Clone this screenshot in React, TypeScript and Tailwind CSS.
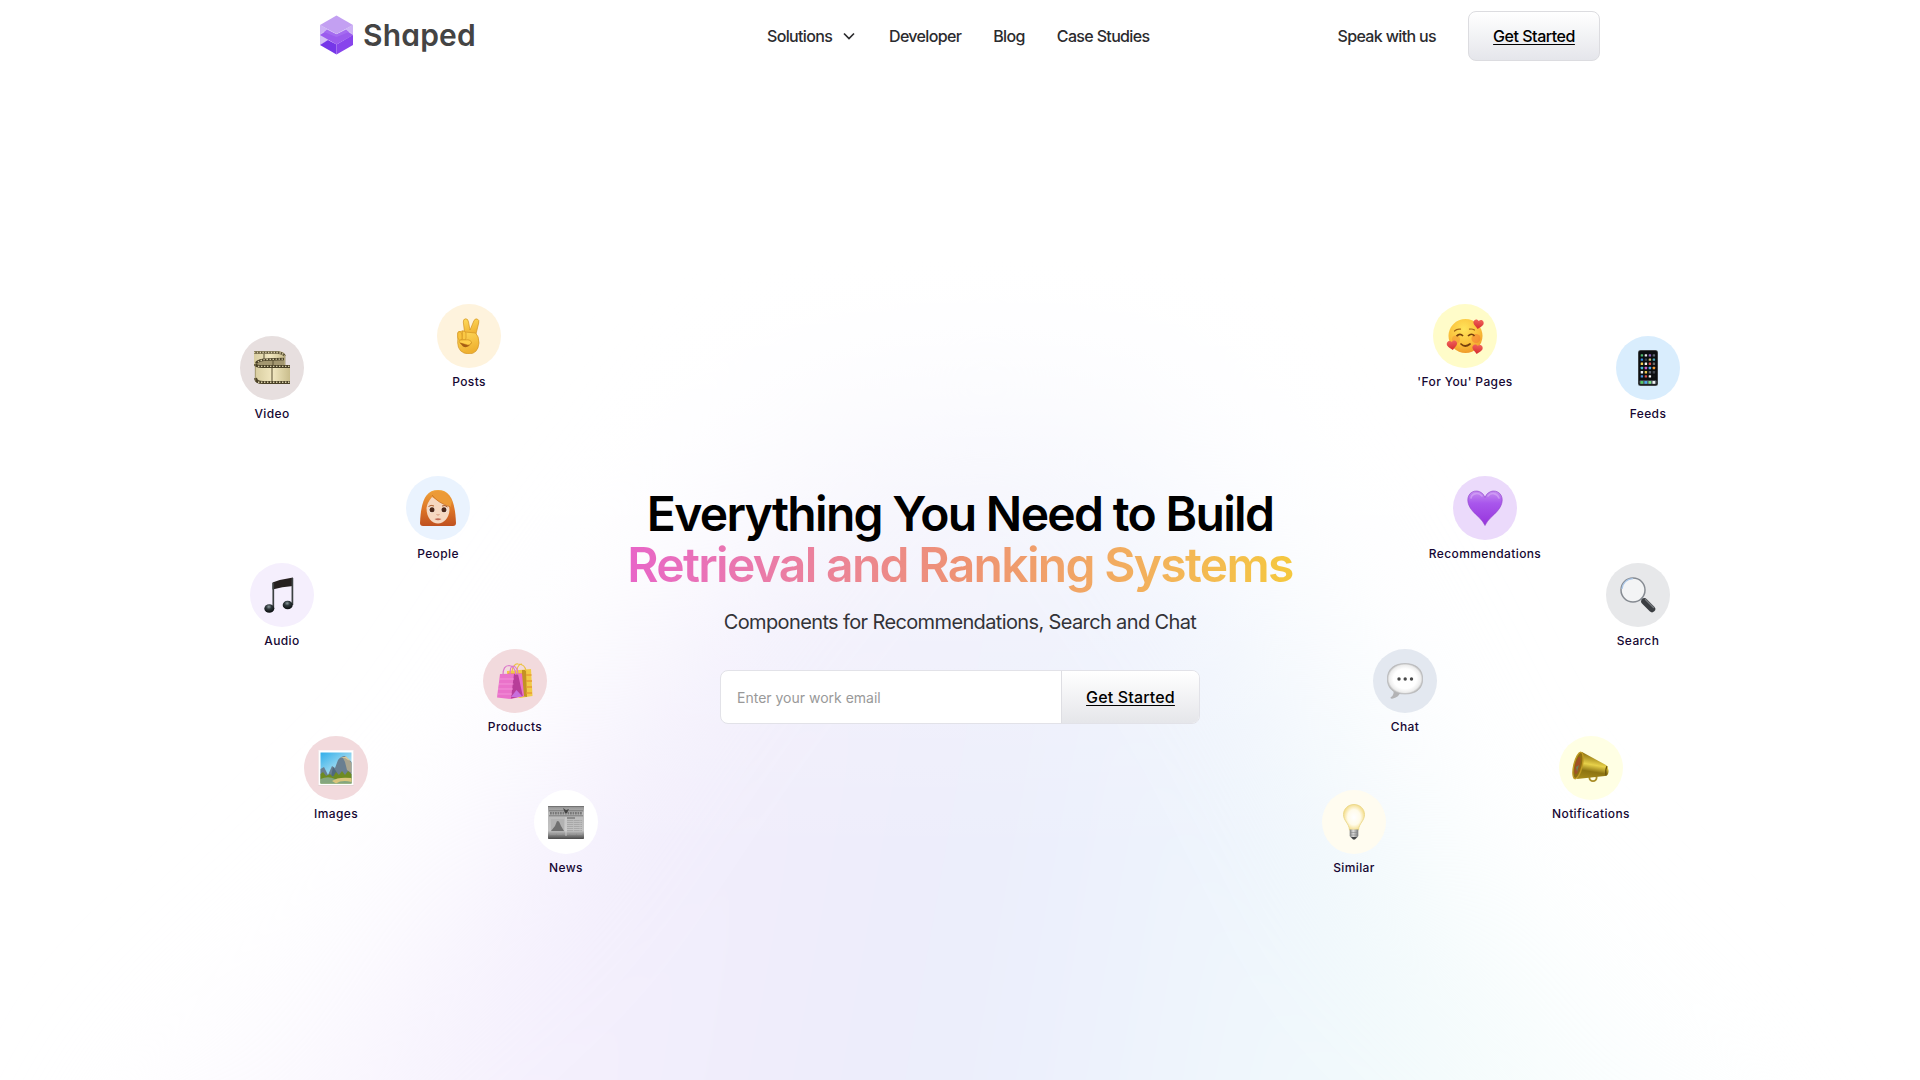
import type { ReactNode } from "react";

const Film = () => (
  <svg viewBox="0 0 36 36" className="size-9">
    <defs>
      <linearGradient id="filmA" x1="0" x2="1">
        <stop offset="0" stopColor="#d8cda0" />
        <stop offset=".5" stopColor="#f1e7c0" />
        <stop offset="1" stopColor="#c9bd8c" />
      </linearGradient>
    </defs>
    <path d="M0 1H25Q31 2 31 5V15H0Z" fill="url(#filmA)" />
    <path d="M1 13Q3 9 14 9L30 8V18H3Z" fill="#a39770" />
    <path d="M1 14Q1 17 6 17H36V34H9Q1 33 1 30Z" fill="url(#filmA)" />
    <path d="M0 2.500H24Q30 3.500 30.500 6" fill="none" stroke="#5a5033" strokeWidth="2.600" />
    <path d="M0 2.500H24Q30 3.500 30.500 6" fill="none" stroke="#d9cfa8" strokeWidth="1.500" strokeDasharray="1.400 1.400" />
    <path d="M2 13Q5 9.500 14 9.500L30 9" fill="none" stroke="#4a4127" strokeWidth="2.600" />
    <path d="M4 12Q7 9.500 14 9.500L30 9" fill="none" stroke="#d9cfa8" strokeWidth="1.200" strokeDasharray="1.400 1.600" />
    <path d="M1 14Q2 16.500 8 16.500H36" fill="none" stroke="#4a4127" strokeWidth="3" />
    <path d="M4 16.300H36" stroke="#d9cfa8" strokeWidth="1.300" strokeDasharray="1.400 1.600" />
    <path d="M1.500 28Q2 32.500 9 32.500H36" fill="none" stroke="#4a4127" strokeWidth="3" />
    <path d="M4 32.300H36" stroke="#d9cfa8" strokeWidth="1.500" strokeDasharray="1.400 1.600" />
    <path d="M18 18V31M10 4V9M19 10V15" stroke="#594e30" strokeWidth="1" />
    <path d="M1.300 14V31M31 5V15" stroke="#8b7f57" strokeWidth=".7" />
  </svg>
);

const Peace = () => (
  <svg viewBox="0 0 36 36" className="size-9">
    <defs>
      <linearGradient id="handA" x1="0" y1="0" x2=".3" y2="1">
        <stop offset="0" stopColor="#ffdb5c" />
        <stop offset="1" stopColor="#efb02f" />
      </linearGradient>
    </defs>
    <g stroke="#d39322" strokeWidth=".7">
      <path d="M14 18L12.300 4Q12.200 .8 14.800 .8Q17 .8 17.500 4L19 12L22.800 3Q24 .2 26.300 1Q28.500 2 27.700 5L24.500 18Z" fill="url(#handA)" />
      <path d="M7 15Q7 13 9.500 13.500Q12 12 14 14L24.500 15Q28 18 28 25Q27 36 17.500 36Q7 35 6.700 25Z" fill="url(#handA)" />
      <path d="M11.500 13Q14.500 12.500 15 15V20Q15 22 13 22Q11 22 11 20Z" fill="#fbc944" />
      <path d="M6.700 15Q7 13.500 9 13.600Q11 14 11 17V21Q10 23 8.500 22Q6.700 21 6.700 19Z" fill="#f9c33e" />
      <path d="M9 22Q7 24 9.500 25L17 27Q20 27 20.500 24.500Q20 22 17 21.800Z" fill="#ffd04b" />
    </g>
    <path d="M8.500 24.500L17 27.200Q20 27 20.800 24L18 28Q15 30 12 28.500Z" fill="#a65e14" />
  </svg>
);

const Woman = () => (
  <svg viewBox="0 0 36 36" className="size-9">
    <defs>
      <linearGradient id="hairA" x1="0" y1="0" x2="0" y2="1">
        <stop offset="0" stopColor="#f0a339" />
        <stop offset=".55" stopColor="#dc7427" />
        <stop offset="1" stopColor="#bf5120" />
      </linearGradient>
    </defs>
    <path d="M18 0C31 0 35 12 36 33Q36 36 33 36H3Q0 36 0 33C1 12 5 0 18 0Z" fill="url(#hairA)" />
    <path d="M6.500 18Q7 13 12 7Q22 12 29 15L29.500 20C29 28 24 33.500 18 33.500S6.500 28 6.500 18Z" fill="#f6d8c0" />
    <path d="M10 4Q16 12 30.500 17L32 11Q25 0 16 1Z" fill="#ec9a36" />
    <path d="M12 5Q18 13 30 16.800" fill="none" stroke="#c46a20" strokeWidth=".7" />
    <path d="M8.500 16.500Q11 14.500 14 16M22 16Q25 14.500 27.500 17" fill="none" stroke="#aa5b28" strokeWidth="1" />
    <ellipse cx="11.700" cy="20" rx="3" ry="2.400" fill="#fff" />
    <ellipse cx="24.300" cy="20" rx="3" ry="2.400" fill="#fff" />
    <circle cx="12" cy="19.800" r="2.500" fill="#4b2718" />
    <circle cx="24" cy="19.800" r="2.500" fill="#4b2718" />
    <path d="M16.500 24.500Q18 25.700 19.500 24.500" fill="none" stroke="#cf9172" strokeWidth=".9" />
    <path d="M14.500 29Q18 27.500 21.500 29Q18 31.500 14.500 29Z" fill="#c06a55" />
  </svg>
);

const Note = () => (
  <svg viewBox="0 0 36 36" className="size-9">
    <defs>
      <radialGradient id="noteA" cx=".45" cy=".3" r=".6">
        <stop offset="0" stopColor="#8e9b9e" />
        <stop offset=".45" stopColor="#2f383b" />
        <stop offset="1" stopColor="#111517" />
      </radialGradient>
    </defs>
    <path d="M8.500 5.500Q18 2 29 .5V9Q18 9.500 8.500 12.500Z" fill="#26201f" />
    <path d="M9.300 6V32M28.400 1V28" stroke="#3c4142" strokeWidth="1.700" />
    <ellipse cx="5.300" cy="31.500" rx="5" ry="4.300" fill="url(#noteA)" />
    <ellipse cx="23.700" cy="28" rx="5" ry="4.300" fill="url(#noteA)" />
  </svg>
);

const Bags = () => (
  <svg viewBox="0 0 36 36" className="size-9">
    <path d="M10 8L34 6L35.500 33L23 35L10 30Z" fill="#f1ca45" />
    <path d="M25 7H29L30 34L25 33Z" fill="#c49223" />
    <path d="M11 11H25M29 12H34.500M29 18H35M29 24H35M29 30H35" stroke="#e79c35" strokeWidth="1.700" />
    <path d="M15 8Q17 0 21 1Q28 1 29 8M20 7Q21 1 25 1" fill="none" stroke="#ecc343" strokeWidth="1.200" />
    <path d="M3 11L25 10.500L27 33L14 36L0 34.500Z" fill="#ea72ca" />
    <path d="M17 11H21L25.800 33L14 35.500Z" fill="#b83d99" />
    <path d="M19.500 27L25.800 34H14Z" fill="#c86edc" />
    <path d="M2 16H17M2 21H16.500M1 26H16M1 31H15" stroke="#f59bdc" strokeWidth=".8" />
    <path d="M6 12Q6 2.500 12 2.500Q18 3 19 12M13 12Q13 3 16 3Q21 4 21 12" fill="none" stroke="#dc79cb" strokeWidth="1.200" />
  </svg>
);

const Picture = () => (
  <svg viewBox="0 0 36 36" className="size-9">
    <defs>
      <linearGradient id="skyA" x1="0" y1="0" x2=".7" y2="1">
        <stop offset="0" stopColor="#30aeea" />
        <stop offset="1" stopColor="#e9f7f5" />
      </linearGradient>
    </defs>
    <rect x=".5" y="1" width="35" height="35.500" fill="#d8c3c5" />
    <rect x=".5" y=".3" width="35" height="35" fill="#fff" />
    <rect x="2.500" y="2.500" width="31" height="31" fill="url(#skyA)" />
    <path d="M2.500 19L6 17L10 25L14 16L17 18L20 10Q23 6 27 6L33.500 12V29H2.500Z" fill="#697f91" />
    <path d="M25 8L28 6.500L33.500 13V23L29 20L27 12Z" fill="#a9a58f" />
    <path d="M22 8L28 6.500L33 11L30 10L27 8Z" fill="#d9c99b" />
    <path d="M13 27L15 17L18 21L20 25Z" fill="#4f697d" />
    <path d="M2.500 24L5 22L8 26L12 24L15 27L18 22L21 25L24 21L27 25L30 21L33.500 24V33.500H2.500Z" fill="#6e8b21" />
    <path d="M2.500 29Q10 25.500 17 29L33.500 28V33.500H2.500Z" fill="#84a67e" />
    <path d="M14 31Q20 26.500 33.500 28V32Q24 29.500 18 33.500Z" fill="#d8c57b" />
  </svg>
);

const Newspaper = () => (
  <svg viewBox="0 0 36 36" className="size-9">
    <defs>
      <linearGradient id="paperA" x1="0" y1="0" x2="0" y2="1">
        <stop offset="0" stopColor="#8f8f8f" />
        <stop offset=".2" stopColor="#b8b8b8" />
        <stop offset=".75" stopColor="#c3c3c3" />
        <stop offset="1" stopColor="#4a4a4a" />
      </linearGradient>
    </defs>
    <rect x="0" y="2" width="36" height="33" rx=".7" fill="url(#paperA)" />
    <path d="M0 2.500H36M1 6.800H35M1 11.800H35" stroke="#6b6b6b" strokeWidth=".8" />
    <path d="M2 9.300H34" stroke="#777" strokeWidth="2.600" strokeDasharray="1.800 .7" />
    <path d="M15 4L18 6L21 5L19 9H17Z" fill="#444" />
    <rect x="3" y="15" width="13" height="13" fill="#b2b2b2" />
    <path d="M3 27L7 22L9 17L11 17.500L13 22L16 27Z" fill="#707070" />
    <path d="M19 14H27" stroke="#5c5c5c" strokeWidth="1" />
    <path d="M19 16.500H34M19 18.500H34M19 20.500H34M19 22.500H34M19 24.500H34M19 26.500H34M2 30H34" stroke="#a2a2a2" strokeWidth=".8" strokeDasharray="6 .7" />
    <path d="M18 13V32" stroke="#ddd" strokeWidth=".7" />
  </svg>
);

const HEART = "M0 -2C-2 -5 -6 -3 -5.400 .5C-4.500 3 -1.500 4.500 0 6.500C1.500 4.500 4.500 3 5.400 .5C6 -3 2 -5 0 -2Z";

const Hearts = () => (
  <svg viewBox="0 0 36 36" className="size-9 overflow-visible">
    <defs>
      <radialGradient id="faceA" cx=".45" cy=".3" r=".75">
        <stop offset="0" stopColor="#ffe45b" />
        <stop offset=".6" stopColor="#fbc13b" />
        <stop offset="1" stopColor="#ed9327" />
      </radialGradient>
      <linearGradient id="redA" x1="0" y1="0" x2="0" y2="1">
        <stop offset="0" stopColor="#f0625b" />
        <stop offset="1" stopColor="#d5292d" />
      </linearGradient>
    </defs>
    <circle cx="18.500" cy="18" r="17" fill="url(#faceA)" />
    <circle cx="9" cy="21.500" r="4" fill="#f38433" opacity=".4" />
    <circle cx="29" cy="20.500" r="4.500" fill="#f3742f" opacity=".5" />
    <path d="M9.500 18.200Q13 14.500 16 18M21 18Q24.500 14.500 27.500 18" fill="none" stroke="#76400d" strokeWidth="1.700" />
    <path d="M7.500 13Q10 10.500 13.500 11.200M22.500 11.200Q25 10.500 27.500 12" fill="none" stroke="#a36517" strokeWidth="1.200" strokeLinecap="round" />
    <path d="M14 26Q18 30 23 26" fill="none" stroke="#76400d" strokeWidth="1.700" strokeLinecap="round" />
    <path d={HEART} transform="translate(31.500 5) rotate(8) scale(.95)" fill="url(#redA)" />
    <path d={HEART} transform="translate(5 26) rotate(-8) scale(.95)" fill="url(#redA)" />
    <path d={HEART} transform="translate(30.500 30) rotate(8) scale(.95)" fill="url(#redA)" />
  </svg>
);

const APPS = [
  ["#4cb56c", "#e8e8e8", "#8a60bd", "#5f6672"],
  ["#378be0", "#36404c", "#cbbd78", "#4aa8b8"],
  ["#f2ce56", "#f5f5f5", "#d94e48", "#6b6b6b"],
  ["#4abbd5", "#c95dc8", "#4daaf0", "#f29a36"],
  ["#f5f5f5", "#edc84c", "#5f6672", "#45494f"],
  ["#4a90e2", "#d94e48", "#f5f5f5", "#151719"],
];

const Phone = () => (
  <svg viewBox="0 0 36 36" className="size-9">
    <rect x="8" y="0" width="20" height="36" rx="2.500" fill="#54585a" />
    <rect x="8.700" y=".7" width="18.600" height="34.600" rx="2" fill="#0c0e10" />
    {APPS.map((row, y) =>
      row.map((color, x) => (
        <rect key={`${x}-${y}`} x={10.7 + x * 4} y={4.2 + y * 4.2} width="2.400" height="2.400" rx=".5" fill={color} />
      )),
    )}
    <rect x="9.500" y="30.300" width="17" height="4" rx="1" fill="#515a60" />
    {["#55cb62", "#4ba7ed", "#7be380", "#f2f2f2"].map((color, x) => (
      <rect key={color} x={10.5 + x * 4} y="31" width="2.700" height="2.700" rx=".5" fill={color} />
    ))}
  </svg>
);

const PurpleHeart = () => (
  <svg viewBox="0 0 36 36" className="size-9">
    <defs>
      <linearGradient id="purpleA" x1="0" y1="0" x2="0" y2="1">
        <stop offset="0" stopColor="#c58cf0" />
        <stop offset=".35" stopColor="#a957ec" />
        <stop offset="1" stopColor="#9634dc" />
      </linearGradient>
    </defs>
    <path d="M18 7.500C15-.8 5-.8 1.800 5.500C-.8 11 2 17 6 21.500C10 26 15 29 18 35.500C21 29 26 26 30 21.500C34 17 36.800 11 34.200 5.500C31-.8 21-.8 18 7.500Z" fill="url(#purpleA)" stroke="#8d3fc7" strokeWidth=".6" />
    <path d="M4 8C5 3 12 2 15 6M21 6C24 2 30 3 32 8" fill="none" stroke="#d9aef6" strokeWidth="1.600" opacity=".6" strokeLinecap="round" />
  </svg>
);

const Magnifier = () => (
  <svg viewBox="0 0 36 36" className="size-9">
    <path d="M21 21L25 25" stroke="#888b90" strokeWidth="3" />
    <path d="M24.500 24.500L32 32" stroke="#3b3e42" strokeWidth="6.500" strokeLinecap="round" />
    <path d="M25.500 22.500L33.500 30.500" stroke="#777a7e" strokeWidth="1.500" strokeLinecap="round" />
    <circle cx="13" cy="13" r="12" fill="#f3f4f5" stroke="#868b92" strokeWidth="1.500" />
    <path d="M2 12A11 11 0 0 1 13 1.700" fill="none" stroke="#a9c5e6" strokeWidth="1.200" />
  </svg>
);

const Bubble = () => (
  <svg viewBox="0 0 36 36" className="size-9">
    <defs>
      <radialGradient id="bubbleA">
        <stop offset=".65" stopColor="#fff" />
        <stop offset=".9" stopColor="#ececec" />
        <stop offset="1" stopColor="#bdbdbd" />
      </radialGradient>
    </defs>
    <path d="M6 26Q8 32 3.500 34.500Q3 36 6 35.500Q12 34 13.500 29Z" fill="#b3b3b5" />
    <path d="M18 .5C29 .5 35.700 6 35.700 16S29 31 18 31S.3 26 .3 16S7 .5 18 .5Z" fill="url(#bubbleA)" stroke="#b4b4b6" strokeWidth=".6" />
    <g fill="#484848">
      <circle cx="12" cy="16" r="1.700" />
      <circle cx="18.200" cy="16" r="1.700" />
      <circle cx="24.500" cy="16" r="1.700" />
    </g>
  </svg>
);

const Megaphone = () => (
  <svg viewBox="0 0 36 36" className="size-9 overflow-visible">
    <defs>
      <linearGradient id="goldA" x1=".2" y1="0" x2="0" y2="1">
        <stop offset="0" stopColor="#8a6d0d" />
        <stop offset=".4" stopColor="#e7d14a" />
        <stop offset=".65" stopColor="#8d7412" />
        <stop offset="1" stopColor="#a98d1b" />
      </linearGradient>
    </defs>
    <circle cx="20" cy="27.500" r="3.600" fill="none" stroke="#a98e28" strokeWidth="1.900" />
    <path d="M9 2L33 15Q36 17 35.500 22Q35 26 32 26L4 29Z" fill="url(#goldA)" />
    <ellipse cx="5" cy="15.500" rx="4.200" ry="13.500" transform="rotate(13 5 15.500)" fill="#8e6f11" stroke="#c09b24" strokeWidth="1.400" />
    <ellipse cx="4.500" cy="15.500" rx="2.400" ry="9" transform="rotate(13 4.500 15.500)" fill="#a15126" />
    <path d="M6 15L4 22L3 17Z" fill="#718157" />
    <path d="M34 16Q32 20 33 25.500" fill="none" stroke="#6b530a" strokeWidth="1.200" />
  </svg>
);

const Bulb = () => (
  <svg viewBox="0 0 36 36" className="size-9">
    <defs>
      <radialGradient id="bulbA" cx=".5" cy=".5">
        <stop offset="0" stopColor="#fff" />
        <stop offset=".6" stopColor="#fffbea" />
        <stop offset="1" stopColor="#f5df91" />
      </radialGradient>
      <linearGradient id="bulbB">
        <stop offset="0" stopColor="#77797a" />
        <stop offset=".4" stopColor="#ddd" />
        <stop offset="1" stopColor="#77797a" />
      </linearGradient>
    </defs>
    <path d="M18 .5C24 .5 28.500 5 28.500 10.500C28.500 17 23 19 22.500 26H13.500C13 19 7.500 17 7.500 10.500C7.500 5 12 .5 18 .5Z" fill="url(#bulbA)" stroke="#ead788" strokeWidth=".9" />
    <path d="M13.700 25.500H22.300V32Q21 35 18 35.500Q15 35 13.700 32Z" fill="url(#bulbB)" />
    <path d="M14 28.500H22M14 31H22" stroke="#888" strokeWidth=".6" />
    <path d="M15 33H21L19 35.500H17Z" fill="#424445" />
  </svg>
);

type Topic = { label: string; place: string; tint: string; icon: ReactNode };

const TOPICS: Topic[] = [
  { label: "Video", place: "left-[240px] top-[336px]", tint: "bg-[#e7dfdf]", icon: <Film /> },
  { label: "Posts", place: "left-[437px] top-[304px]", tint: "bg-[#fef3dd]", icon: <Peace /> },
  { label: "People", place: "left-[406px] top-[476px]", tint: "bg-[#eaf3fe]", icon: <Woman /> },
  { label: "Audio", place: "left-[250px] top-[563px]", tint: "bg-[#f5effd]", icon: <Note /> },
  { label: "Products", place: "left-[483px] top-[649px]", tint: "bg-[#f2dadd]", icon: <Bags /> },
  { label: "Images", place: "left-[304px] top-[736px]", tint: "bg-[#f2dadd]", icon: <Picture /> },
  { label: "News", place: "left-[534px] top-[790px]", tint: "bg-white", icon: <Newspaper /> },
  { label: "'For You' Pages", place: "left-[1433px] top-[304px]", tint: "bg-[#fffcc9]", icon: <Hearts /> },
  { label: "Feeds", place: "left-[1616px] top-[336px]", tint: "bg-[#d9edfd]", icon: <Phone /> },
  { label: "Recommendations", place: "left-[1453px] top-[476px]", tint: "bg-[#ebdafb]", icon: <PurpleHeart /> },
  { label: "Search", place: "left-[1606px] top-[563px]", tint: "bg-[#e7e8ea]", icon: <Magnifier /> },
  { label: "Chat", place: "left-[1373px] top-[649px]", tint: "bg-[#e3e8f0]", icon: <Bubble /> },
  { label: "Notifications", place: "left-[1559px] top-[736px]", tint: "bg-[#ffffe4]", icon: <Megaphone /> },
  { label: "Similar", place: "left-[1322px] top-[790px]", tint: "bg-[#fffcf0]", icon: <Bulb /> },
];

function TopicBadge({ label, place, tint, icon }: Topic) {
  return (
    <div className={`absolute flex w-16 flex-col items-center gap-1.5 ${place}`}>
      <div className={`flex size-16 items-center justify-center rounded-full ${tint}`}>{icon}</div>
      <span className="whitespace-nowrap text-xs leading-4 font-medium tracking-[0.38px] text-[#160733]">{label}</span>
    </div>
  );
}

function Logo() {
  return (
    <a className="flex items-center gap-[10px] pb-0.5">
      <svg viewBox="0 0 33 40" className="h-10 w-[33px]">
        <path d="M0 10V30L16.500 20.500L33 30V10L16.500 19Z" fill="#d5c1f6" />
        <path d="M16.500 .5L33 10L16.500 19L0 10Z" fill="#c3a0f2" />
        <path d="M0 10L7 14L0 19Z M33 10L26 14L33 19Z" fill="#cdb2f5" />
        <path d="M0 20L7 15.500L16.500 19.500L26 15.500L33 20L16.500 29.500Z" fill="#9b5cee" />
        <path d="M7 14.500L16.500 19.500L26 14.500L29 17L16.500 22L4 17Z" fill="#a46bf0" />
        <path d="M0 30L8 25L16.500 29.500V39.500Z" fill="#7636e8" />
        <path d="M33 20V30L16.500 39.500V29.500Z" fill="#8844ec" />
      </svg>
      <span className="text-[30px] leading-10 font-semibold tracking-[0.2px] text-[#444] [font-feature-settings:'cv11']">
        Shaped
      </span>
    </a>
  );
}

function Header() {
  return (
    <header className="mx-auto flex h-[72px] w-[1280px] items-center text-base font-medium tracking-[-0.65px] text-[#2b2b2e]">
      <div className="w-[447px]">
        <Logo />
      </div>
      <nav className="flex items-center gap-8">
        <a className="flex w-[90px] items-center justify-between">
          Solutions
          <svg viewBox="0 0 16 16" className="size-4" fill="none" stroke="currentColor" strokeWidth="1.700">
            <path d="M3 5.500L8 10.500L13 5.500" />
          </svg>
        </a>
        <a>Developer</a>
        <a>Blog</a>
        <a>Case Studies</a>
      </nav>
      <div className="ml-auto flex items-center gap-8">
        <a>Speak with us</a>
        <button className="h-[50px] w-[132px] rounded-lg border border-[#dcdce0] bg-gradient-to-b from-white to-[#e5e6eb] tracking-[-0.48px] text-black underline underline-offset-2">
          Get Started
        </button>
      </div>
    </header>
  );
}

/** Soft pastel glow that rises from the bottom edge of the hero. */
function Glow() {
  return (
    <div className="pointer-events-none absolute inset-0 overflow-hidden">
      <div className="absolute inset-x-0 top-0 h-[1500px] blur-[85px]">
        <div className="h-full w-full bg-[linear-gradient(100deg,#faf7fe_24%,#f4effd_34%,#f0edfb_42%,#ebedfb_52%,#eef4fd_62%,#f1fafb_71%,#f8fdfd_80%)] [clip-path:polygon(860px_330px,1120px_330px,1310px_620px,1440px_880px,1690px_1120px,1900px_1500px,20px_1500px,190px_1120px,490px_840px,650px_600px)]" />
      </div>
      <div className="absolute inset-x-0 top-0 h-full bg-[linear-gradient(to_bottom,#fff_260px,rgba(255,255,255,.65)_440px,rgba(255,255,255,.25)_640px,rgba(255,255,255,0)_860px)]" />
    </div>
  );
}

export default function App() {
  return (
    <main className="relative flex h-[1080px] w-[1920px] flex-col overflow-hidden bg-white font-[Inter,sans-serif]">
      <Glow />
      <div className="relative">
        <Header />
      </div>
      <section className="relative mt-[416px] flex flex-col items-center">
        <h1 className="flex flex-col items-center text-5xl leading-[51px] font-semibold tracking-[-1.68px] text-black">
          <span>Everything You Need to Build</span>
          <span className="bg-gradient-to-r from-[#e865c8] via-[#ee9273] to-[#f5c83e] bg-clip-text pb-2 text-transparent">
            Retrieval and Ranking Systems
          </span>
        </h1>
        <p className="mt-2.5 text-xl leading-7 tracking-[-0.63px] text-[#333338]">
          Components for Recommendations, Search and Chat
        </p>
        <form className="mt-[34px] flex h-[54px] w-[480px] overflow-hidden rounded-lg border border-[#e2e2e8] bg-white">
          <input
            className="w-[340px] px-4 pt-0.5 text-sm outline-none placeholder:text-[#999]"
            placeholder="Enter your work email"
          />
          <button
            type="button"
            className="flex-1 border-l border-[#dedee3] bg-gradient-to-b from-white to-[#e5e6ea] text-base font-medium tracking-[0.16px] text-black underline underline-offset-2"
          >
            Get Started
          </button>
        </form>
      </section>
      {TOPICS.map((topic) => (
        <TopicBadge key={topic.label} {...topic} />
      ))}
    </main>
  );
}
